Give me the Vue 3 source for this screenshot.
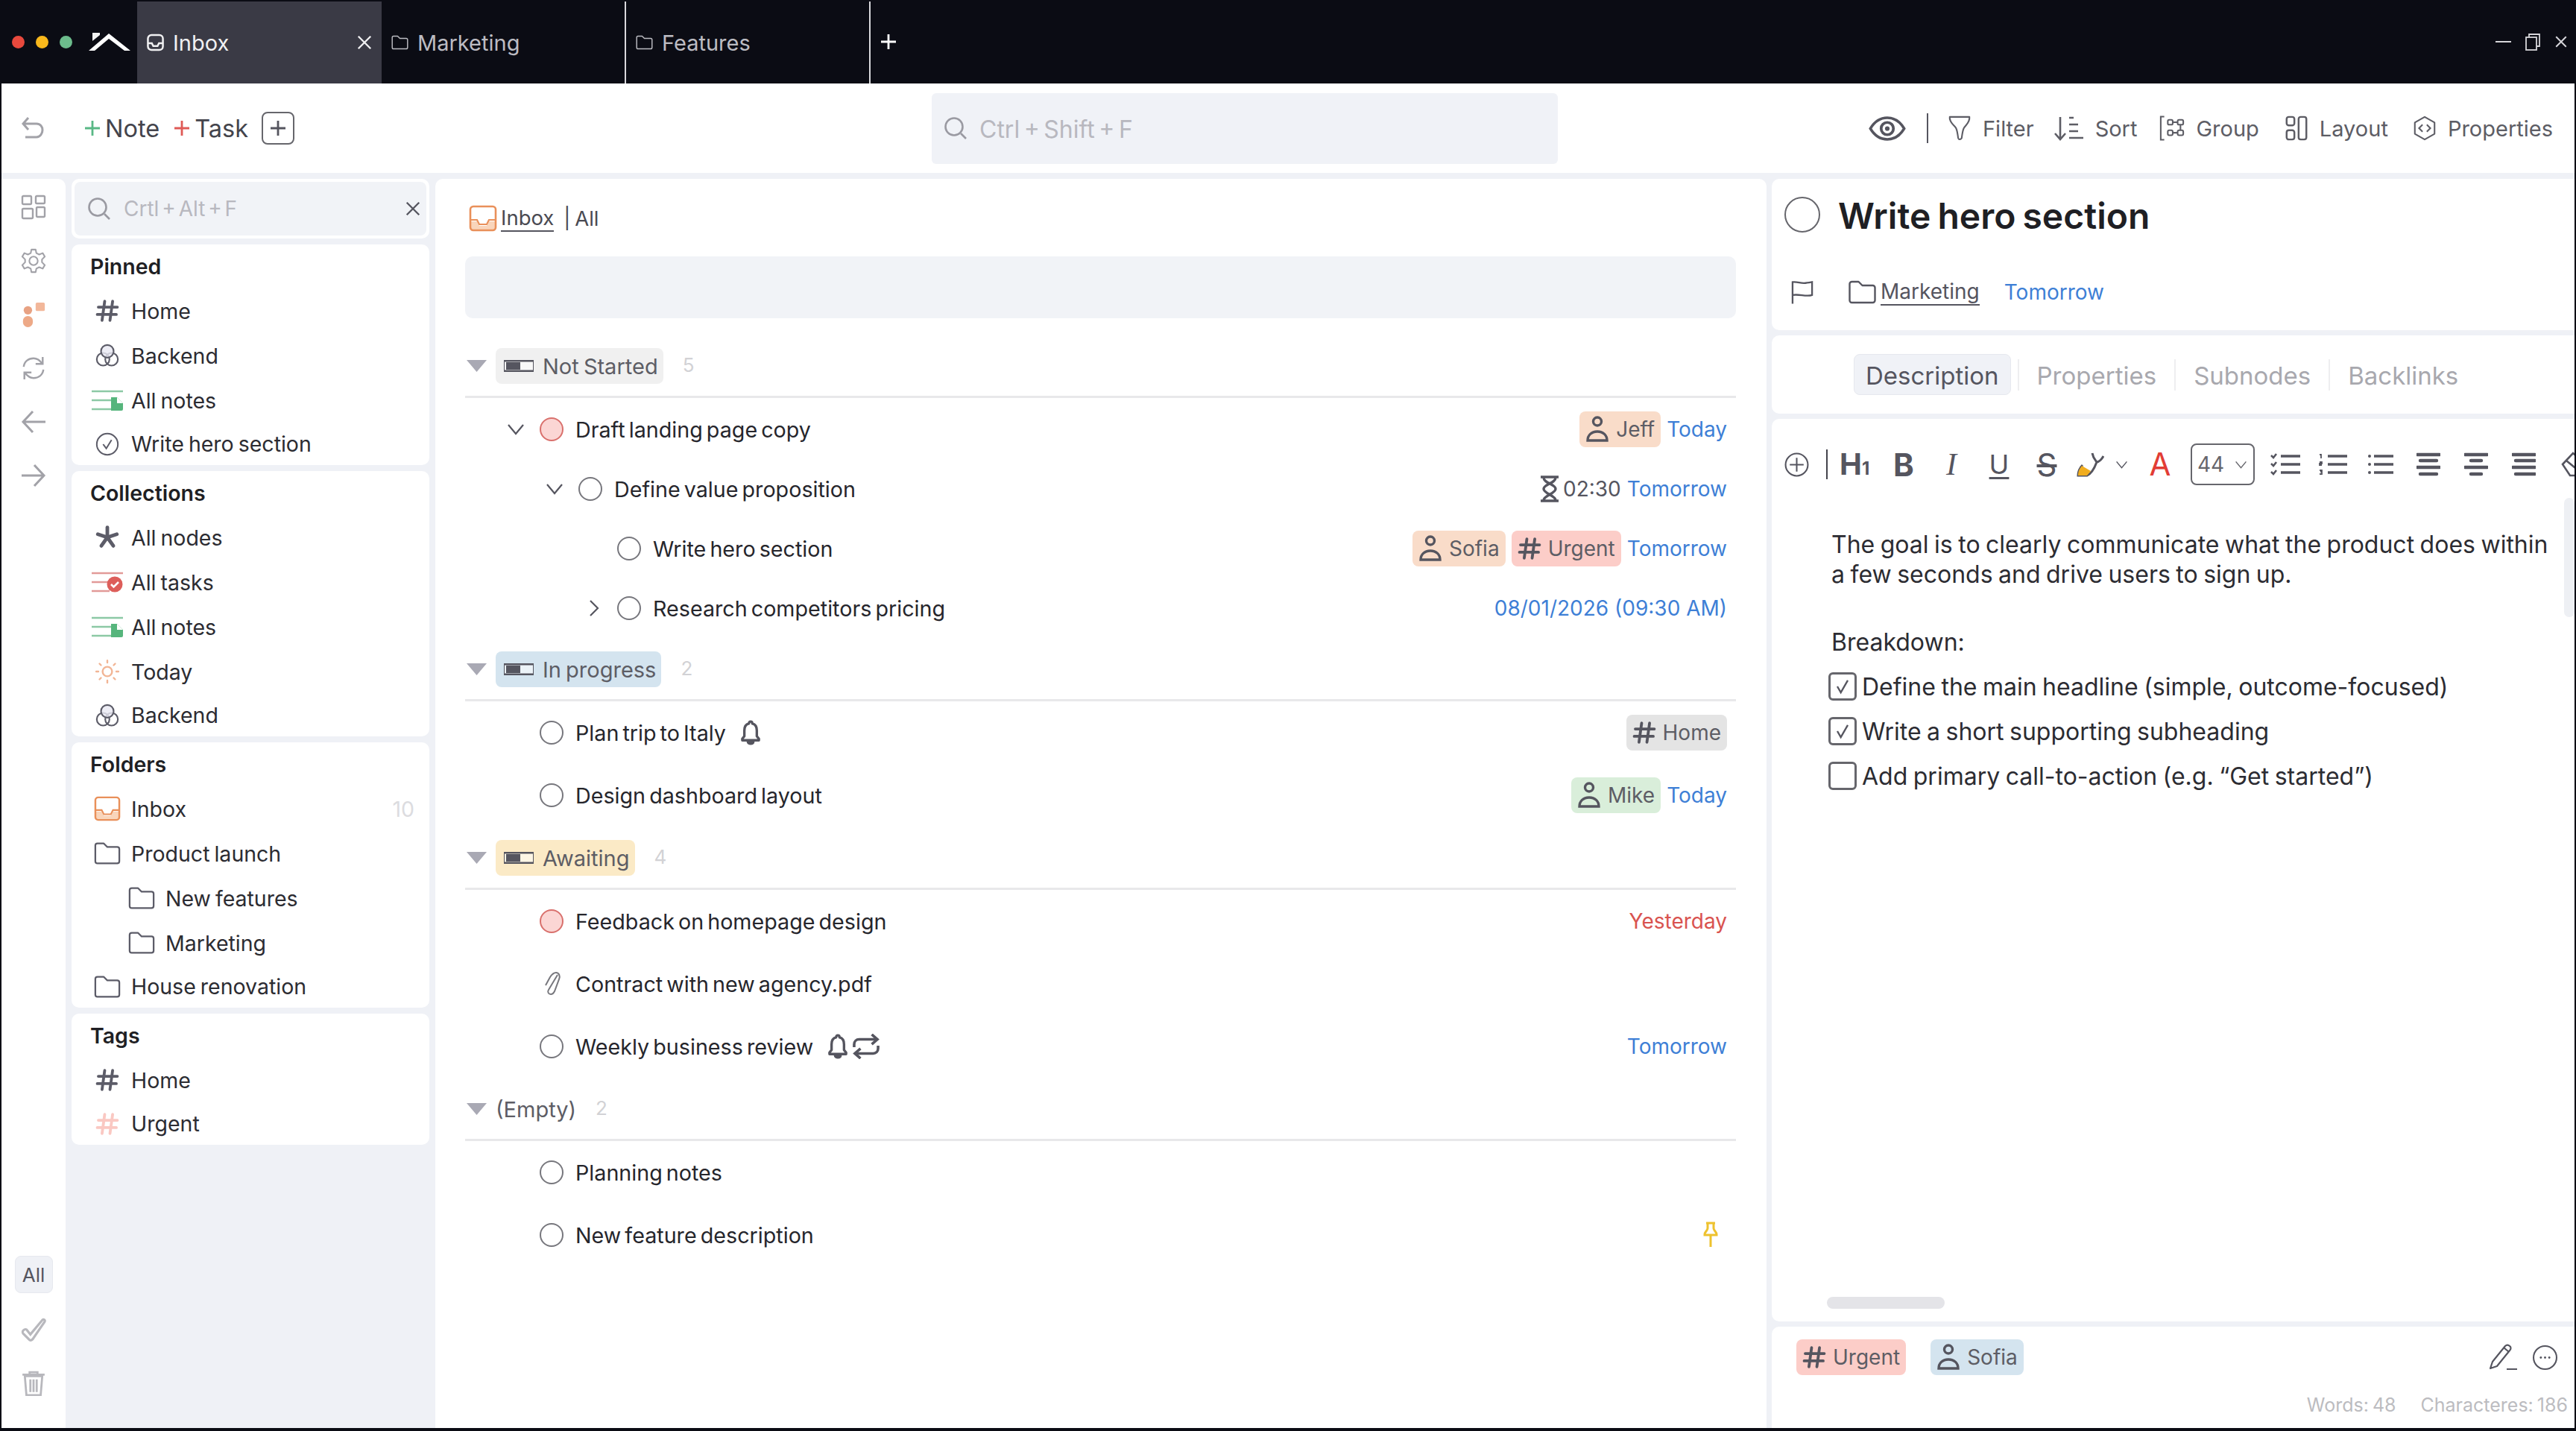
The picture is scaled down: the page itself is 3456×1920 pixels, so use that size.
<script setup>
const sections = [
  { title: 'Pinned', items: [
    { icon: 'hash', cls: 'c-dark', label: 'Home' },
    { icon: 'backend', cls: 'c-dark', label: 'Backend' },
    { icon: 'notes', cls: '', label: 'All notes', wide: true },
    { icon: 'checkc', cls: 'c-dark', label: 'Write hero section' }
  ]},
  { title: 'Collections', items: [
    { icon: 'star', cls: 'c-dark', label: 'All nodes' },
    { icon: 'tasks', cls: '', label: 'All tasks', wide: true },
    { icon: 'notes', cls: '', label: 'All notes', wide: true },
    { icon: 'sun', cls: 'c-sun', label: 'Today' },
    { icon: 'backend', cls: 'c-dark', label: 'Backend' }
  ]},
  { title: 'Folders', items: [
    { icon: 'inbox', cls: 'c-orange', label: 'Inbox', count: '10' },
    { icon: 'folder', cls: 'c-dark', label: 'Product launch' },
    { icon: 'folder', cls: 'c-dark', label: 'New features', nested: true },
    { icon: 'folder', cls: 'c-dark', label: 'Marketing', nested: true },
    { icon: 'folder', cls: 'c-dark', label: 'House renovation' }
  ]},
  { title: 'Tags', items: [
    { icon: 'hash', cls: 'c-dark', label: 'Home' },
    { icon: 'hash', cls: 'c-pink', label: 'Urgent' }
  ]}
]

const groups = [
  { name: 'Not Started', count: 5, bg: 'g-grey', tight: true, rows: [
    { level: 0, chev: 'chev-down', status: 'red', label: 'Draft landing page copy',
      right: [{ badge: 'person', text: 'Jeff', bg: 'b-peach' }, { date: 'Today' }] },
    { level: 1, chev: 'chev-down', status: 'open', label: 'Define value proposition',
      right: [{ timer: '02:30' }, { date: 'Tomorrow' }] },
    { level: 2, status: 'open', label: 'Write hero section',
      right: [{ badge: 'person', text: 'Sofia', bg: 'b-peach' }, { badge: 'hash', text: 'Urgent', bg: 'b-pink' }, { date: 'Tomorrow' }] },
    { level: 2, chev: 'chev-right', status: 'open', label: 'Research competitors pricing',
      right: [{ date: '08/01/2026 (09:30 AM)' }] }
  ]},
  { name: 'In progress', count: 2, bg: 'g-blue', rows: [
    { level: 0, status: 'open', label: 'Plan trip to Italy', extras: ['bell'],
      right: [{ badge: 'hash', text: 'Home', bg: 'b-grey' }] },
    { level: 0, status: 'open', label: 'Design dashboard layout',
      right: [{ badge: 'person', text: 'Mike', bg: 'b-green' }, { date: 'Today' }] }
  ]},
  { name: 'Awaiting', count: 4, bg: 'g-yellow', rows: [
    { level: 0, status: 'red', label: 'Feedback on homepage design', right: [{ date: 'Yesterday', late: true }] },
    { level: 0, status: 'clip', label: 'Contract with new agency.pdf', right: [] },
    { level: 0, status: 'open', label: 'Weekly business review', extras: ['bell', 'repeat'], right: [{ date: 'Tomorrow' }] }
  ]},
  { name: '(Empty)', count: 2, bg: 'g-none', rows: [
    { level: 0, status: 'open', label: 'Planning notes', right: [] },
    { level: 0, status: 'open', label: 'New feature description', right: [{ pin: true }] }
  ]}
]

const checks = [
  { done: true, text: 'Define the main headline (simple, outcome-focused)' },
  { done: true, text: 'Write a short supporting subheading' },
  { done: false, text: 'Add primary call-to-action (e.g. “Get started”)' }
]
const actions = [
  { icon: 'filter', text: 'Filter', cls: 'a-filter' },
  { icon: 'sort', text: 'Sort', cls: 'a-sort' },
  { icon: 'group', text: 'Group', cls: 'a-group' },
  { icon: 'layout', text: 'Layout', cls: 'a-layout' },
  { icon: 'props', text: 'Properties', cls: 'a-props' }
]
</script>

<template>
  <div class="shell">
    <svg class="sprite" xmlns="http://www.w3.org/2000/svg">
      <symbol id="hash" viewBox="0 0 24 24"><path d="M9.500 3 7 21M17 3l-2.500 18M3.500 8.500h18M2.500 15.500h18" fill="none" stroke="currentColor" stroke-width="2.700" stroke-linecap="round"/></symbol>
      <symbol id="backend" viewBox="0 0 24 24"><g fill="none" stroke="currentColor" stroke-width="1.500"><circle cx="8" cy="15.500" r="6"/><circle cx="16" cy="15.500" r="6"/><circle cx="12" cy="8" r="6" fill="#e9e9f2" fill-opacity=".8"/></g></symbol>
      <symbol id="notes" viewBox="0 0 42 28"><g fill="none" stroke="#8cc9a5" stroke-width="2.400"><path d="M0 2h42M0 14h26M0 26h26"/></g><path d="M26 10h8l8 8v8a2 2 0 0 1-2 2H26z" fill="#56b57c"/><path d="M34 10v8h8" fill="#fff"/></symbol>
      <symbol id="tasks" viewBox="0 0 42 28"><g fill="none" stroke="#e29a98" stroke-width="2.400"><path d="M0 2h42M0 14h24M0 26h24"/></g><circle cx="31" cy="17" r="10.500" fill="#dd5e5a"/><path d="m26 17 3.500 3.500 6.500-6.500" fill="none" stroke="#fff" stroke-width="2.600"/></symbol>
      <symbol id="checkc" viewBox="0 0 24 24"><g fill="none" stroke="currentColor" stroke-width="1.400"><circle cx="12" cy="12" r="10"/><path d="m8 12 3 4 5-8"/></g></symbol>
      <symbol id="star" viewBox="0 0 24 24"><path d="M12 12V2.500M12 12l9-3M12 12l5.700 8M12 12l-5.700 8M12 12 3 9" fill="none" stroke="currentColor" stroke-width="3.400" stroke-linecap="round"/></symbol>
      <symbol id="sun" viewBox="0 0 24 24"><g fill="none" stroke="currentColor" stroke-width="1.700" stroke-linecap="round"><circle cx="12" cy="12" r="4.500"/><path d="M12 1.500v2M12 20.500v2M1.500 12h2M20.500 12h2M4.600 4.600 6 6M18 18l1.400 1.400M4.600 19.400 6 18M18 6l1.400-1.400"/></g></symbol>
      <symbol id="inbox" viewBox="0 0 38 36"><path d="M2 22h9l3 6h10l3-6h9v9a3 3 0 0 1-3 3H5a3 3 0 0 1-3-3z" fill="#f9d5bb"/><rect x="2" y="2" width="34" height="32" rx="4" fill="none" stroke="currentColor" stroke-width="2.600"/><path d="M2 20h9l3 6h10l3-6h9" fill="none" stroke="currentColor" stroke-width="2.200"/></symbol>
      <symbol id="folder" viewBox="0 0 38 32"><path d="M2 5a3 3 0 0 1 3-3h9l5 5h14a3 3 0 0 1 3 3v17a3 3 0 0 1-3 3H5a3 3 0 0 1-3-3z" fill="none" stroke="currentColor" stroke-width="2.400" stroke-linejoin="round"/></symbol>
      <symbol id="inboxs" viewBox="0 0 24 24"><g fill="none" stroke="currentColor" stroke-width="2.600"><rect x="1.500" y="1.500" width="21" height="21" rx="5"/><path d="M1.500 13H7l2 4h6l2-4h5.500"/></g></symbol>
      <symbol id="person" viewBox="0 0 32 36"><g fill="none" stroke="currentColor" stroke-width="3.400"><circle cx="16" cy="7.500" r="5.500"/><path d="M3 33c0-7 5-12 13-12s13 5 13 12z"/></g></symbol>
      <symbol id="status" viewBox="0 0 40 16"><rect x="0" y="1" width="40" height="14" fill="#fff" fill-opacity=".55"/><path d="M0 1.200h40M0 14.800h40" fill="none" stroke="currentColor" stroke-width="2.400"/><path d="M0 1v14M40 1v14" fill="none" stroke="currentColor" stroke-width="2"/><rect x="3" y="3" width="19" height="10" fill="currentColor"/></symbol>
      <symbol id="chev-down" viewBox="0 0 24 16"><path d="m2 2 10 12L22 2" fill="none" stroke="currentColor" stroke-width="2.200"/></symbol>
      <symbol id="chev-right" viewBox="0 0 16 24"><path d="m3 2 10 10L3 22" fill="none" stroke="currentColor" stroke-width="2.200"/></symbol>
      <symbol id="bell" viewBox="0 0 28 36"><path d="M14 2c1.500 0 2.500 1 2.500 3C21 6 23 10 23 15v8l3 4v2H2v-2l3-4v-8C5 10 7 6 11.500 5 11.500 3 12.500 2 14 2zM10 31h8c0 2-2 3-4 3s-4-1-4-3z" fill="none" stroke="currentColor" stroke-width="3.600" stroke-linejoin="round"/></symbol>
      <symbol id="repeat" viewBox="0 0 40 36"><g fill="none" stroke="currentColor" stroke-width="3.800"><path d="M3 19v-4c0-4 3-7 7-7h24"/><path d="m28 1 8 7-8 7"/><path d="M37 17v4c0 4-3 7-7 7H6"/><path d="m12 21-8 7 8 7"/></g></symbol>
      <symbol id="hourglass" viewBox="0 0 26 36"><path d="M1 2h24M1 34h24M5 3c0 7 16 9 16 15S5 27 5 33M21 3c0 7-16 9-16 15s16 9 16 15" fill="none" stroke="currentColor" stroke-width="3.400"/></symbol>
      <symbol id="pin" viewBox="0 0 24 36"><path d="M6 2h12M8 2v7c0 3-4 5-4 8v1h16v-1c0-3-4-5-4-8V2M12 18v16" fill="none" stroke="currentColor" stroke-width="3"/></symbol>
      <symbol id="clip" viewBox="0 0 24 36"><path d="M20 6 8 26c-2 3 0 6 3 6s4-2 5-4L22 12c2-4 0-9-4-9s-6 3-8 6L4 20" fill="none" stroke="currentColor" stroke-width="2"/></symbol>
      <symbol id="eye" viewBox="0 0 48 32"><path d="M2 16C8 6 15 2 24 2s16 4 22 14c-6 10-13 14-22 14S8 26 2 16z" fill="none" stroke="currentColor" stroke-width="3.400"/><circle cx="24" cy="16" r="8" fill="none" stroke="currentColor" stroke-width="3.600"/><circle cx="24" cy="16" r="3" fill="currentColor"/></symbol>
      <symbol id="filter" viewBox="0 0 32 36"><path d="M2 2h28c1 8-6 12-8 16-1 2-2 6-3 14-1 2-4 3-5 0-1-8-2-12-3-14C9 14 1 10 2 2z" fill="none" stroke="currentColor" stroke-width="2.200" stroke-linejoin="round"/></symbol>
      <symbol id="sort" viewBox="0 0 40 34"><path d="M8 2v29M1 24l7 8 7-8M20 3h6M20 12h12M20 21h12M20 30h19" fill="none" stroke="currentColor" stroke-width="2.600"/></symbol>
      <symbol id="group" viewBox="0 0 36 36"><g fill="none" stroke="currentColor" stroke-width="2.200"><path d="M7 1.500H2v33h5"/><rect x="12" y="6" width="7" height="7" rx="2"/><rect x="26" y="6" width="8" height="7" rx="2"/><rect x="12" y="21" width="7" height="7" rx="2"/><rect x="26" y="21" width="8" height="7" rx="2"/><path d="M19 9.500h7M19 24.500h7M30 13v8"/></g></symbol>
      <symbol id="layout" viewBox="0 0 32 36"><g fill="none" stroke="currentColor" stroke-width="2.600"><rect x="2" y="2" width="11" height="12" rx="3"/><rect x="2" y="21" width="11" height="13" rx="3"/><rect x="19" y="2" width="11" height="32" rx="3"/></g></symbol>
      <symbol id="props" viewBox="0 0 32 36"><g fill="none" stroke="currentColor" stroke-width="2.200"><path d="M16 2 30 10v16l-14 8-14-8V10z" stroke-linejoin="round"/><path d="m13 13-5 5 5 5M19 13l5 5-5 5"/></g></symbol>
      <symbol id="search" viewBox="0 0 32 32"><g fill="none" stroke="currentColor" stroke-width="2.600"><circle cx="14" cy="14" r="11.500"/><path d="m23 23 7 7"/></g></symbol>
      <symbol id="undo" viewBox="0 0 32 32"><path d="M10 2 3 10l7 8M4 10h17c5 0 8 4 8 8.500S26 28 21 28H6" fill="none" stroke="currentColor" stroke-width="3"/></symbol>
      <symbol id="plus" viewBox="0 0 24 24"><path d="M12 2v20M2 12h20" fill="none" stroke="currentColor" stroke-width="2.800"/></symbol>
      <symbol id="close" viewBox="0 0 24 24"><path d="m3 3 18 18M21 3 3 21" fill="none" stroke="currentColor" stroke-width="2.600"/></symbol>
      <symbol id="grid" viewBox="0 0 34 34"><g fill="none" stroke="currentColor" stroke-width="2.400"><rect x="2" y="2" width="12" height="11" rx="1.500"/><rect x="20" y="2" width="12" height="10" rx="1.500"/><rect x="2" y="19" width="14" height="13" rx="1.500"/><rect x="21" y="17" width="11" height="13" rx="1.500"/></g></symbol>
      <symbol id="gear" viewBox="0 0 34 36"><g fill="none" stroke="currentColor" stroke-width="2.200"><circle cx="17" cy="18" r="6"/><path d="M14 2h6l1 5 4 2 5-2 3 5-4 4v4l4 4-3 5-5-2-4 2-1 5h-6l-1-5-4-2-5 2-3-5 4-4v-4L1 12l3-5 5 2 4-2z" stroke-linejoin="round"/></g></symbol>
      <symbol id="blobs" viewBox="0 0 34 36"><rect x="20" y="1" width="13" height="12" rx="2" fill="#f2b79a"/><circle cx="9" cy="12" r="6" fill="#e8a283"/><rect x="2" y="20" width="14" height="16" rx="7" fill="#eda987"/></symbol>
      <symbol id="sync" viewBox="0 0 34 36"><g fill="none" stroke="currentColor" stroke-width="2.600"><path d="M3 16C4 8 10 4 17 4c5 0 9 3 12 7"/><path d="M30 2v10H20"/><path d="M31 20c-1 8-7 12-14 12-5 0-9-3-12-7"/><path d="M4 34V24h10"/></g></symbol>
      <symbol id="arrowl" viewBox="0 0 34 32"><path d="M16 2 3 16l13 14M3 16h30" fill="none" stroke="currentColor" stroke-width="3"/></symbol>
      <symbol id="arrowr" viewBox="0 0 34 32"><path d="m18 2 13 14-13 14M31 16H1" fill="none" stroke="currentColor" stroke-width="3"/></symbol>
      <symbol id="check" viewBox="0 0 32 32"><path d="M3 17c2-2 4-2 5 0l4 5L27 4c2-2 4 0 3 2L15 28c-2 2-4 2-5 0L3 21c-1-1-1-3 0-4z" fill="none" stroke="currentColor" stroke-width="3"/></symbol>
      <symbol id="trash" viewBox="0 0 30 32"><path d="M1 5h28M10 5V2h10v3" fill="none" stroke="currentColor" stroke-width="2.600"/><path d="M4 7h22l-2 24H6zM11 11v16M15 11v16M19 11v16" fill="none" stroke="currentColor" stroke-width="2.600"/></symbol>
      <symbol id="flag" viewBox="0 0 32 32"><path d="M2 32V2c8-1 12 3 20 1 2 0 7-1 7-1v18c-8 3-18-2-27 0" fill="none" stroke="currentColor" stroke-width="2.400"/></symbol>
      <symbol id="plusc" viewBox="0 0 32 32"><g fill="none" stroke="currentColor" stroke-width="2"><circle cx="16" cy="16" r="14.500"/><path d="M16 7v18M7 16h18"/></g></symbol>
      <symbol id="high" viewBox="0 0 38 34"><path d="M22 2c1 6 3 8 6 12-3 8-8 16-13 18H3c0-6 2-10 6-14" fill="none" stroke="#55555f" stroke-width="3"/><path d="M8 19 20 26l-5 6H3c0-6 2-9 5-13z" fill="#f1ad1e"/><path d="M28 14c3 0 7-4 9-8" fill="none" stroke="#55555f" stroke-width="3"/></symbol>
      <symbol id="lcheck" viewBox="0 0 40 30"><g fill="none" stroke="currentColor" stroke-width="3.400"><path d="M14 4h26M14 15h26M14 26h26"/></g><g fill="none" stroke="currentColor" stroke-width="2.600"><path d="m1 3 3 3 4-5M1 14l3 3 4-5M1 25l3 3 4-5"/></g></symbol>
      <symbol id="lnum" viewBox="0 0 38 30"><g fill="none" stroke="currentColor" stroke-width="3.400"><path d="M12 4h26M12 15h26M12 26h26"/></g><g fill="none" stroke="currentColor" stroke-width="1.800"><path d="M1 2h2v5M1 12h3v2H1v2h3M1 23h3v2H2h2v3H1"/></g></symbol>
      <symbol id="lbul" viewBox="0 0 34 30"><g fill="none" stroke="currentColor" stroke-width="3.400"><path d="M8 4h26M8 15h26M8 26h26"/></g><circle cx="2" cy="4" r="2" fill="currentColor"/><circle cx="2" cy="15" r="2" fill="currentColor"/><circle cx="2" cy="26" r="2" fill="currentColor"/></symbol>
      <symbol id="aleft" viewBox="0 0 32 32"><path d="M1 3h30M5 11h22M1 20h30M5 29h22" fill="none" stroke="currentColor" stroke-width="4.400" stroke-linecap="round"/></symbol>
      <symbol id="acent" viewBox="0 0 32 32"><path d="M1 3h30M9 11h14M1 20h30M9 29h14" fill="none" stroke="currentColor" stroke-width="4.400" stroke-linecap="round"/></symbol>
      <symbol id="aright" viewBox="0 0 32 32"><path d="M1 3h30M5 11h26M1 20h30M5 29h26" fill="none" stroke="currentColor" stroke-width="4.400" stroke-linecap="round"/></symbol>
      <symbol id="eraser" viewBox="0 0 34 34"><path d="M2 17 16 2l16 14-12 16H12zM7 12l17 14" fill="none" stroke="currentColor" stroke-width="2.600"/></symbol>
      <symbol id="pencil" viewBox="0 0 38 36"><path d="M2 33 5 24 22 3c2-2 4-2 6 0 2 1 2 4 0 6L11 30z" fill="none" stroke="currentColor" stroke-width="2.200" stroke-linejoin="round"/><path d="M20 5l7 6M24 34h14" fill="none" stroke="currentColor" stroke-width="2.200"/></symbol>
      <symbol id="dots" viewBox="0 0 32 32"><circle cx="16" cy="16" r="15" fill="none" stroke="currentColor" stroke-width="2"/><circle cx="10.500" cy="16" r="1.400" fill="currentColor"/><circle cx="16" cy="16" r="1.400" fill="currentColor"/><circle cx="21.500" cy="16" r="1.400" fill="currentColor"/></symbol>
      <symbol id="restore" viewBox="0 0 24 24"><g fill="none" stroke="currentColor" stroke-width="1.800"><rect x="3" y="6" width="14" height="17"/><path d="M7 6V2h14v16h-4"/></g></symbol>
      <symbol id="logo" viewBox="0 0 56 24"><path d="M0 24 27 1l29 23h-8L27 8 8 24z" fill="#fff"/><path d="M5 0h10v3L5 11z" fill="#f2f2f2"/></symbol>
      <symbol id="tri" viewBox="0 0 29 16"><path d="M1 0h27l-13.500 16z" fill="currentColor"/></symbol>
    </svg>

    <header class="titlebar">
      <div class="lights"><i class="light l-red"></i><i class="light l-amber"></i><i class="light l-green"></i></div>
      <svg class="logo"><use href="#logo"/></svg>
      <div class="tab active">
        <svg class="tab-ic"><use href="#inboxs"/></svg><span>Inbox</span>
        <svg class="tab-x"><use href="#close"/></svg>
      </div>
      <div class="tab"><svg class="tab-ic"><use href="#folder"/></svg><span>Marketing</span></div>
      <div class="tab"><svg class="tab-ic"><use href="#folder"/></svg><span>Features</span></div>
      <svg class="tab-plus"><use href="#plus"/></svg>
      <div class="winctl">
        <i class="win-min"></i>
        <svg class="win-res"><use href="#restore"/></svg>
        <svg class="win-x"><use href="#close"/></svg>
      </div>
    </header>

    <div class="toolbar">
      <div class="tb-left">
        <svg class="undo"><use href="#undo"/></svg>
        <svg class="add-ic green"><use href="#plus"/></svg><span class="add-t">Note</span>
        <svg class="add-ic red"><use href="#plus"/></svg><span class="add-t">Task</span>
        <button class="add-btn"><svg class="add-ic2"><use href="#plus"/></svg></button>
      </div>
      <div class="tb-search">
        <svg class="s-ic"><use href="#search"/></svg>
        <span>Ctrl + Shift + F</span>
      </div>
      <div class="tb-right">
        <svg class="eye"><use href="#eye"/></svg>
        <i class="tb-sep"></i>
        <div v-for="a in actions" :key="a.text" class="action" :class="a.cls">
          <svg class="act-ic"><use :href="'#' + a.icon"/></svg><span>{{ a.text }}</span>
        </div>
      </div>
    </div>

    <div class="body">
      <nav class="rail">
        <div class="rail-item"><svg class="r-ic"><use href="#grid"/></svg></div>
        <div class="rail-item"><svg class="r-ic"><use href="#gear"/></svg></div>
        <div class="rail-item"><svg class="r-ic"><use href="#blobs"/></svg></div>
        <div class="rail-item"><svg class="r-ic"><use href="#sync"/></svg></div>
        <div class="rail-item"><svg class="r-ic"><use href="#arrowl"/></svg></div>
        <div class="rail-item"><svg class="r-ic"><use href="#arrowr"/></svg></div>
        <div class="rail-bottom">
          <div class="rail-all">All</div>
          <svg class="r-ic r-check"><use href="#check"/></svg>
          <svg class="r-ic r-trash"><use href="#trash"/></svg>
        </div>
      </nav>

      <aside class="side">
        <div class="side-search">
          <div class="side-search-in">
            <svg class="ss-ic"><use href="#search"/></svg>
            <span>Crtl + Alt + F</span>
            <svg class="ss-x"><use href="#close"/></svg>
          </div>
        </div>
        <section v-for="s in sections" :key="s.title" class="card">
          <h3 class="card-h">{{ s.title }}</h3>
          <div v-for="it in s.items" :key="it.label" class="item" :class="{ nested: it.nested }">
            <span class="item-ic" :class="it.cls">
              <svg :class="it.wide ? 'ic-wide' : 'ic-std'"><use :href="'#' + it.icon"/></svg>
            </span>
            <span class="item-t">{{ it.label }}</span>
            <span v-if="it.count" class="item-n">{{ it.count }}</span>
          </div>
        </section>
      </aside>

      <main class="main">
        <div class="crumb">
          <svg class="crumb-ic"><use href="#inbox"/></svg>
          <span class="crumb-link">Inbox</span>
          <span class="crumb-sep">| All</span>
        </div>
        <div class="filterbox"></div>

        <section v-for="g in groups" :key="g.name" class="group">
          <div class="g-head">
            <svg class="tri"><use href="#tri"/></svg>
            <div class="g-badge" :class="g.bg">
              <svg v-if="g.bg !== 'g-none'" class="status"><use href="#status"/></svg>
              <span>{{ g.name }}</span>
            </div>
            <span class="g-count">{{ g.count }}</span>
          </div>
          <div class="rows" :class="{ tight: g.tight }">
            <div v-for="r in g.rows" :key="r.label" class="row" :class="'lv' + r.level">
              <span class="chev">
                <svg v-if="r.chev" :class="r.chev"><use :href="'#' + r.chev"/></svg>
              </span>
              <svg v-if="r.status === 'clip'" class="clip"><use href="#clip"/></svg>
              <i v-else class="dot" :class="{ 'dot-red': r.status === 'red' }"></i>
              <span class="row-t">{{ r.label }}</span>
              <svg v-for="e in r.extras || []" :key="e" class="extra" :class="'x-' + e"><use :href="'#' + e"/></svg>
              <div class="row-r">
                <template v-for="(x, i) in r.right" :key="i">
                  <span v-if="x.badge" class="badge" :class="x.bg">
                    <svg :class="x.badge === 'hash' ? 'b-hash' : 'b-person'"><use :href="'#' + x.badge"/></svg>{{ x.text }}
                  </span>
                  <span v-else-if="x.date" class="date" :class="{ late: x.late }">{{ x.date }}</span>
                  <span v-else-if="x.timer" class="timer"><svg class="hg"><use href="#hourglass"/></svg>{{ x.timer }}</span>
                  <svg v-else-if="x.pin" class="pin"><use href="#pin"/></svg>
                </template>
              </div>
            </div>
          </div>
        </section>
      </main>

      <div class="detail">
        <section class="d-head">
          <div class="d-title">
            <i class="d-circle"></i>
            <h1>Write hero section</h1>
          </div>
          <div class="d-meta">
            <svg class="flag"><use href="#flag"/></svg>
            <svg class="d-folder"><use href="#folder"/></svg>
            <span class="d-link">Marketing</span>
            <span class="d-date">Tomorrow</span>
          </div>
        </section>

        <section class="d-tabs">
          <span class="d-tab on">Description</span><i class="d-sep"></i>
          <span class="d-tab">Properties</span><i class="d-sep"></i>
          <span class="d-tab">Subnodes</span><i class="d-sep"></i>
          <span class="d-tab">Backlinks</span>
        </section>

        <section class="d-editor">
          <div class="ed-bar">
            <svg class="e-plus"><use href="#plusc"/></svg>
            <i class="e-sep"></i>
            <span class="e-h1">H<small>1</small></span>
            <span class="e-slot e-b">B</span>
            <span class="e-slot e-i">I</span>
            <span class="e-slot e-u">U</span>
            <span class="e-slot e-s">S</span>
            <span class="e-high"><svg class="high"><use href="#high"/></svg></span>
            <span class="e-chev"><svg class="e-chev-ic"><use href="#chev-down"/></svg></span>
            <span class="e-a">A</span>
            <div class="e-size"><span>44</span><svg class="e-chev-ic"><use href="#chev-down"/></svg></div>
            <span class="e-slot e-first"><svg class="l-check"><use href="#lcheck"/></svg></span>
            <span class="e-slot"><svg class="l-num"><use href="#lnum"/></svg></span>
            <span class="e-slot"><svg class="l-bul"><use href="#lbul"/></svg></span>
            <span class="e-slot"><svg class="l-al"><use href="#aleft"/></svg></span>
            <span class="e-slot"><svg class="l-al"><use href="#acent"/></svg></span>
            <span class="e-slot"><svg class="l-al"><use href="#aright"/></svg></span>
            <svg class="l-er"><use href="#eraser"/></svg>
          </div>
          <div class="ed-text">
            <p class="ed-p">The goal is to clearly communicate what the product does within<br>a few seconds and drive users to sign up.</p>
            <p class="ed-bd">Breakdown:</p>
            <div v-for="c in checks" :key="c.text" class="ed-check">
              <span class="cb"><svg v-if="c.done" class="cb-ic" viewBox="0 0 24 24"><path d="m6 12 4 7 8-14" fill="none" stroke="currentColor" stroke-width="2"/></svg></span>
              <span>{{ c.text }}</span>
            </div>
          </div>
          <i class="sb-v"></i>
          <i class="sb-h"></i>
        </section>

        <section class="d-foot">
          <div class="f-row">
            <span class="badge b-pink"><svg class="b-hash"><use href="#hash"/></svg>Urgent</span>
            <span class="badge b-blue"><svg class="b-person"><use href="#person"/></svg>Sofia</span>
            <svg class="f-pen"><use href="#pencil"/></svg>
            <svg class="f-dots"><use href="#dots"/></svg>
          </div>
          <div class="f-stats"><span>Words: 48</span><span>Characteres: 186</span></div>
        </section>
      </div>
    </div>
  </div>
</template>

<style>
html, body { margin: 0; padding: 0; background: #0b0c14; }
</style>

<style scoped>
* { box-sizing: border-box; }
p, h1, h3 { margin: 0; }
i { display: block; font-style: normal; }
svg { display: block; flex: none; }
.sprite { display: none; }

.shell {
  width: 3456px; height: 1920px; overflow: hidden;
  display: flex; flex-direction: column;
  border: 0 solid #0b0c14; border-width: 0 2px 4px;
  background: #eff1f6;
  font-family: Inter, "Liberation Sans", sans-serif;
  font-size: 28.5px; color: #26262c; word-spacing: -2px;
}

/* title bar */
.titlebar { height: 112px; flex: none; background: #0b0c14; display: flex; align-items: flex-end; color: #d6d6da; }
.lights { display: flex; gap: 15px; align-self: center; margin-left: 14px; }
.light { width: 17px; height: 17px; border-radius: 50%; }
.l-red { background: #e8493d; }
.l-amber { background: #f9b81c; }
.l-green { background: #6cbc8c; }
.logo { width: 56px; height: 24px; align-self: center; margin-left: 22px; }
.tab { width: 328px; height: 110px; display: flex; align-items: center; gap: 12px; padding: 0 12px 0 13px; border-right: 2px solid #d8d8dc; color: #bcbcc2; font-size: 29px; }
.tab.active { background: #3a3a45; color: #f0f0f2; border-right: 0; margin-left: 9px; }
.tab-ic { width: 23px; height: 24px; }
.tab-x { width: 22px; height: 22px; margin-left: auto; }
.tab-plus { width: 24px; height: 24px; align-self: center; margin-left: 12px; color: #fff; }
.winctl { margin-left: auto; align-self: center; display: flex; align-items: center; gap: 17px; padding-right: 9px; color: #d6d6da; }
.win-min { width: 21px; height: 2px; background: currentColor; }
.win-res { width: 24px; height: 24px; }
.win-x { width: 18px; height: 20px; }

/* toolbar */
.toolbar { height: 120px; flex: none; background: #fff; display: grid; grid-template-columns: 1248px 840px 1fr; align-items: center; }
.tb-left { display: flex; align-items: center; padding-left: 25px; color: #44444c; font-size: 32.500px; }
.undo { width: 34px; height: 32px; color: #a2a2a8; margin-right: 51px; }
.add-ic { width: 24px; height: 24px; margin-right: 5px; }
.add-ic.green { color: #59b885; }
.add-ic.red { color: #df5a56; margin-left: 18px; }
.add-btn { width: 44px; height: 44px; margin-left: 18px; border: 2px solid #66666c; border-radius: 8px; background: #fff; padding: 0; display: flex; align-items: center; justify-content: center; color: #55555f; }
.add-ic2 { width: 24px; height: 24px; }
.tb-search { height: 95px; background: #f0f2f7; border-radius: 6px; display: flex; align-items: center; gap: 16px; padding-left: 16px; color: #b8b8bf; font-size: 32px; word-spacing: -3.500px; }
.tb-search span { padding-top: 2px; }
.s-ic { width: 32px; height: 32px; color: #9a9aa2; }
.tb-right { display: flex; align-items: center; padding-left: 417px; color: #5d5d65; font-size: 29px; }
.eye { width: 50px; height: 33px; color: #55555f; }
.tb-sep { width: 2px; height: 40px; background: #55555f; margin-left: 28px; }
.action { display: flex; align-items: center; }
.act-ic { height: 34px; width: 34px; margin-right: 14px; }
.a-filter { margin-left: 25px; }
.a-sort { margin-left: 26px; }
.a-group { margin-left: 29px; }
.a-layout { margin-left: 33px; }
.a-props { margin-left: 32px; }
.a-sort .act-ic { width: 42px; }
.a-group .act-ic { width: 36px; }

/* layout */
.body { flex: 1; min-height: 0; display: flex; padding-top: 8px; }
.rail { width: 86px; flex: none; background: #fff; border-top-right-radius: 10px; display: flex; flex-direction: column; align-items: center; padding-top: 2px; color: #a2a2a8; }
.rail-item { height: 72px; display: flex; align-items: center; justify-content: center; }
.r-ic { width: 34px; height: 34px; }
.rail-bottom { margin-top: auto; padding-bottom: 43px; display: flex; flex-direction: column; align-items: center; }
.rail-all { width: 51px; height: 50px; border-radius: 8px; background: #eff1f6; border: 1px solid #e6e8ee; display: flex; align-items: center; justify-content: center; font-size: 26px; color: #55555f; }
.r-check { margin-top: 32px; color: #b8b8bd; }
.r-trash { margin-top: 38px; color: #b8b8bd; }

.side { width: 480px; flex: none; margin: 0 8px; display: flex; flex-direction: column; gap: 8px; }
.side-search { height: 80px; background: #fff; border-radius: 10px; padding: 4px; }
.side-search-in { height: 72px; background: #f1f3f7; border-radius: 8px; display: flex; align-items: center; padding: 0 7px 0 17px; color: #b8b8bf; font-size: 28px; word-spacing: -4px; }
.ss-ic { width: 32px; height: 32px; color: #9a9aa2; margin-right: 17px; }
.ss-x { width: 22px; height: 22px; margin-left: auto; color: #55555f; }

.card { background: #fff; border-radius: 10px; }
.card-h { height: 59px; display: flex; align-items: center; padding-left: 25px; font-size: 28.5px; font-weight: 600; color: #1f1f24; }
.item { height: 60px; display: flex; align-items: center; padding: 0 20px 0 28px; color: #2c2c32; }
.item:last-child { height: 57px; }
.nested { padding-left: 74px; }
.item-ic { width: 40px; height: 40px; margin-right: 12px; display: flex; align-items: center; justify-content: center; }
.ic-std { width: 36px; height: 34px; }
.ic-wide { width: 42px; height: 28px; }
.c-dark { color: #5c5c68; }
.c-orange { color: #e9905a; }
.c-sun { color: #f2b595; }
.c-pink { color: #fac8c2; }
.item-n { margin-left: auto; color: #dcdcdf; }

/* main */
.main { flex: 1; min-width: 0; background: #fff; border-radius: 10px 10px 0 0; padding: 33px 41px 0 40px; }
.crumb { display: flex; align-items: center; height: 40px; margin-left: 5px; color: #4a4a52; font-size: 27.500px; }
.crumb-ic { width: 38px; height: 36px; color: #e9905a; margin-right: 5px; }
.crumb-link { border-bottom: 2px solid #55555f; line-height: 34px; }
.crumb-sep { margin-left: 13px; }
.filterbox { height: 83px; margin-top: 31px; background: #f1f3f7; border-radius: 10px; }
.group { margin-top: 18px; }
.filterbox + .group { margin-top: 40px; }
.g-head { height: 67px; display: flex; align-items: flex-start; border-bottom: 3px solid #e8e8ea; }
.tri { width: 29px; height: 16px; margin: 16px 11px 0 1px; color: #a9a9b4; }
.g-badge { height: 48px; border-radius: 8px; display: flex; align-items: center; gap: 12px; padding: 0 7px 0 11px; color: #5d5d65; font-size: 29px; word-spacing: -2px; }
.g-grey { background: #f0f0f0; }
.g-blue { background: #d4e4ef; }
.g-yellow { background: #fbeac6; }
.g-none { padding: 0; }
.status { width: 40px; height: 16px; color: #55555f; }
.g-count { margin: 7px 0 0 26px; color: #d2d2d5; font-size: 26px; }
.rows.tight { padding-top: 2px; }
.row { height: 84px; display: flex; align-items: center; padding-right: 12px; color: #26262c; }
.tight .row { height: 80px; }
.chev { width: 55px; height: 34px; flex: none; display: flex; align-items: center; justify-content: flex-end; padding-right: 19px; color: #55555f; margin-left: 45px; }
.lv1 .chev { width: 107px; }
.lv2 .chev { width: 159px; padding-right: 23px; }
.chev-down { width: 26px; height: 16px; }
.chev-right { width: 16px; height: 24px; }
.dot { width: 32px; height: 32px; border-radius: 50%; border: 2.500px solid #77777d; flex: none; }
.dot-red { background: #fbd6d4; border-color: #d9706c; }
.clip { width: 26px; height: 36px; margin: 0 3px; color: #77777d; }
.row-t { margin-left: 16px; white-space: nowrap; font-size: 28.7px; word-spacing: -3px; }
.extra { color: #55555f; }
.x-bell { width: 26px; height: 34px; margin-left: 20px; }
.x-repeat { width: 38px; height: 34px; margin-left: 6px; }
.row-r { margin-left: auto; display: flex; align-items: center; gap: 8px; font-size: 28px; word-spacing: 0; }
.badge { height: 48px; border-radius: 8px; display: inline-flex; align-items: center; gap: 8px; padding: 0 8px 0 7px; color: #5d5d65; white-space: nowrap; font-size: 28px; }
.b-person { width: 34px; height: 36px; color: #55555f; }
.b-hash { width: 34px; height: 36px; color: #55555f; }
.b-peach { background: #f9dcc9; }
.b-pink { background: #fccdc8; }
.b-grey { background: #e4e4e4; }
.b-green { background: #d9eeda; }
.b-blue { background: #d4e4ef; }
.date { color: #3e7fd6; white-space: nowrap; }
.late { color: #d9534f; }
.timer { display: inline-flex; align-items: center; gap: 4px; color: #55555f; }
.hg { width: 28px; height: 36px; }
.pin { width: 24px; height: 36px; color: #eec22e; margin-right: 10px; }

/* detail */
.detail { width: 1077px; flex: none; margin-left: 7px; display: flex; flex-direction: column; gap: 7px; }
.d-head { height: 203px; background: #fff; border-radius: 10px 0 0 10px; padding: 24px 0 0 17px; }
.d-title { display: flex; align-items: center; gap: 24px; height: 48px; }
.d-circle { width: 48px; height: 48px; border-radius: 50%; border: 2.500px solid #66666c; flex: none; }
.d-title h1 { font-size: 48px; font-weight: 600; color: #1f1f24; white-space: nowrap; padding-top: 3px; word-spacing: -3px; }
.d-meta { display: flex; align-items: center; height: 40px; margin-top: 60px; padding-left: 9px; font-size: 28px; }
.flag { width: 31px; height: 32px; color: #55555f; }
.d-folder { width: 39px; height: 32px; color: #55555f; margin-left: 45px; }
.d-link { margin-left: 5px; color: #55555f; border-bottom: 2px solid #55555f; line-height: 34px; }
.d-date { margin-left: 33px; color: #3e7fd6; }
.d-tabs { height: 105px; flex: none; background: #fff; border-radius: 10px 0 0 10px; display: flex; align-items: center; padding-left: 110px; font-size: 33px; color: #a8a8ae; }
.d-tab { padding: 2px 15px 0; white-space: nowrap; height: 55px; display: flex; align-items: center; }
.d-tab.on { background: #f0f2f7; border: 1px solid #e6e8ee; border-radius: 8px; color: #55555f; }
.d-sep { width: 2px; height: 42px; background: #eeeef0; margin: 0 9px; }
.d-editor { position: relative; flex: 1; min-height: 0; background: #fff; border-radius: 10px 0 0 10px; padding: 33px 0 0 17px; overflow: hidden; }
.ed-bar { height: 56px; display: flex; align-items: center; color: #55555f; white-space: nowrap; }
.ed-bar > * { flex: none; }
.e-plus { width: 33px; height: 33px; }
.e-sep { width: 2px; height: 40px; background: #44444c; margin-left: 23px; }
.e-h1 { width: 44px; margin-left: 16px; font-size: 40px; font-weight: 700; line-height: 1; }
.e-h1 small { font-size: 24px; }
.e-slot { width: 64px; display: flex; align-items: center; justify-content: center; font-size: 42px; }
.e-b { margin-left: 10px; font-weight: 700; }
.e-i { font-family: "Liberation Serif", serif; font-style: italic; }
.e-u { text-decoration: underline; text-underline-offset: 4px; font-size: 36px; }
.e-s { text-decoration: line-through; font-size: 42px; }
.e-high { width: 52px; display: flex; justify-content: center; }
.high { width: 38px; height: 34px; }
.e-chev { width: 32px; display: flex; justify-content: center; }
.e-chev-ic { width: 17px; height: 11px; }
.e-a { width: 72px; text-align: center; font-size: 42px; color: #e23d35; line-height: 1; }
.e-size { width: 86px; height: 56px; margin-left: 5px; border: 2px solid #66666c; border-radius: 8px; display: flex; align-items: center; gap: 14px; padding-left: 7px; font-size: 28px; color: #66666c; }
.e-first { margin-left: 9px; }
.l-check { width: 40px; height: 30px; }
.l-num { width: 38px; height: 30px; }
.l-bul { width: 34px; height: 30px; }
.l-al { width: 32px; height: 32px; }
.l-er { width: 34px; height: 34px; margin-left: 18px; }
.ed-text { padding: 60px 0 0 63px; font-size: 32px; word-spacing: -1.500px; color: #2c2c32; }
.ed-p { line-height: 40px; white-space: nowrap; }
.ed-bd { line-height: 40px; margin-top: 51px; }
.ed-check { height: 60px; display: flex; align-items: center; gap: 7px; white-space: nowrap; }
.ed-bd + .ed-check { margin-top: 9px; }
.cb { width: 38px; height: 38px; border: 3px solid #66666c; border-radius: 6px; margin-left: -4px; flex: none; color: #55555f; display: flex; align-items: center; justify-content: center; }
.cb-ic { width: 28px; height: 28px; }
.sb-v { position: absolute; right: 0; top: 106px; width: 14px; height: 160px; background: #eef0f4; border-radius: 8px; }
.sb-h { position: absolute; left: 74px; bottom: 17px; width: 158px; height: 16px; background: #e4e4e8; border-radius: 8px; }
.d-foot { height: 136px; flex: none; background: #fff; border-radius: 10px 0 0 0; padding: 17px 9px 0 33px; }
.f-row { display: flex; align-items: center; gap: 33px; height: 48px; }
.f-pen { width: 38px; height: 36px; color: #55555f; margin-left: auto; }
.f-dots { width: 33px; height: 33px; color: #55555f; margin-left: -12px; margin-right: 14px; }
.f-stats { display: flex; justify-content: flex-end; gap: 33px; margin-top: 25px; font-size: 25px; color: #bcbcc0; }
</style>
